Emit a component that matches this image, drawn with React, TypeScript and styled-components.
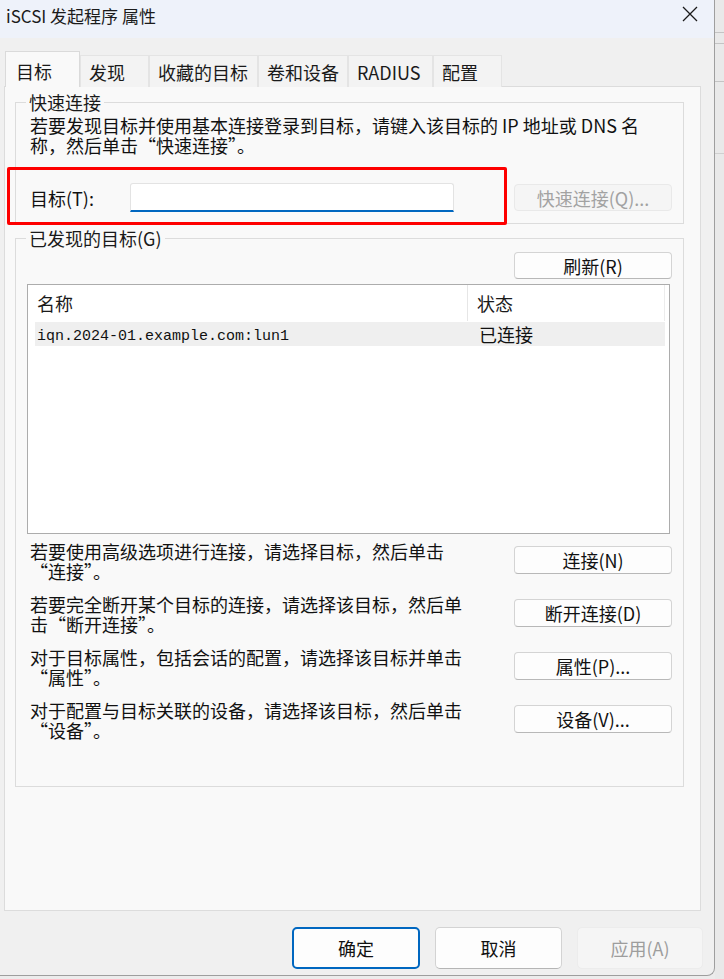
import styled, { createGlobalStyle } from 'styled-components';

const GlobalStyle = createGlobalStyle`
  html, body {
    margin: 0;
    padding: 0;
    background: #ececec;
  }
  body {
    font-family: "Noto Sans CJK SC", "Noto Sans", sans-serif;
    color: #000;
    overflow: hidden;
  }
  * { box-sizing: border-box; }
`;

const Screen = styled.div`
  display: flex;
  width: 724px;
  height: 979px;
`;

const Window = styled.div`
  position: relative;
  width: 715px;
  height: 976px;
  background: #f0f0f0;
  border-right: 1px solid #9e9e9e;
  border-bottom: 1px solid #9e9e9e;
  border-bottom-right-radius: 8px;
  display: flex;
  flex-direction: column;
`;

const Edge = styled.div`
  flex: 1;
  background:
    linear-gradient(#c4c4c4, #c4c4c4) 0 32px / 100% 1px no-repeat,
    linear-gradient(#c4c4c4, #c4c4c4) 0 43px / 100% 1px no-repeat,
    linear-gradient(#c4c4c4, #c4c4c4) 0 81px / 100% 1px no-repeat,
    linear-gradient(#d0d0d0, #d0d0d0) 0 153px / 100% 1px no-repeat,
    #e9e9e9;
`;

const TitleBar = styled.div`
  height: 38px;
  background: #eef2fa;
  display: flex;
  justify-content: space-between;
  align-items: flex-start;
  padding: 5px 16px 0 6px;
`;

const Title = styled.div`
  font-size: 17px;
  line-height: 22px;
  color: #1b1b1b;
`;

const Close = styled.div`
  width: 16px;
  height: 16px;
  margin-top: 1px;
  display: flex;
`;

const TabStrip = styled.div`
  margin-top: 13px;
  padding-left: 5px;
  height: 36px;
  display: flex;
  align-items: flex-end;
  position: relative;
  z-index: 1;
`;

const Tab = styled.div<{ $w: number; $active?: boolean }>`
  width: ${p => p.$w}px;
  height: ${p => (p.$active ? 36 : 32)}px;
  padding: ${p => (p.$active ? '3px 0 0 10px' : '0 0 0 8px')};
  display: flex;
  align-items: center;
  font-size: 18px;
  line-height: 24px;
  white-space: nowrap;
  color: #1a1a1a;
  background: ${p => (p.$active ? '#f9f9f9' : '#f3f3f3')};
  border: 1px solid ${p => (p.$active ? '#dadada' : '#e4e4e4')};
  border-bottom: none;
`;

const Panel = styled.div`
  margin: -1px 13px 0 4px;
  height: 825px;
  background: #f9f9f9;
  border: 1px solid #dcdcdc;
  padding: 15px 16px 0 10px;
  display: flex;
  flex-direction: column;
`;

const GroupBox = styled.div<{ $top: number; $bottom: number }>`
  position: relative;
  margin-top: ${p => p.$top}px;
  border: 1px solid #dcdcdc;
  padding: 12px 11px ${p => p.$bottom}px 14px;
  display: flex;
  flex-direction: column;
`;

const Caption = styled.span`
  position: absolute;
  top: -11px;
  left: 10px;
  padding: 0 3px;
  background: #f9f9f9;
  font-size: 18px;
  line-height: 20px;
  color: #1a1a1a;
`;

const Text = styled.div`
  font-size: 18px;
  line-height: 20px;
  white-space: nowrap;
  color: #111;
`;

const TargetRow = styled.div`
  margin-top: 28px;
  height: 29px;
  display: flex;
  align-items: center;
`;

const Label = styled.div`
  width: 100px;
  font-size: 18px;
  line-height: 20px;
  color: #111;
`;

const Input = styled.div`
  width: 324px;
  height: 29px;
  background: #fff;
  border: 1px solid #e3e3e3;
  border-bottom: 2px solid #0067c0;
  border-radius: 3px 3px 0 0;
`;

const Button = styled.div<{ $disabled?: boolean; $w?: number; $h?: number }>`
  width: ${p => p.$w ?? 158}px;
  height: ${p => p.$h ?? 28}px;
  display: flex;
  align-items: center;
  justify-content: center;
  font-size: 18px;
  line-height: 20px;
  white-space: nowrap;
  border-radius: 4px;
  color: ${p => (p.$disabled ? '#a2a2a2' : '#111')};
  background: ${p => (p.$disabled ? '#f5f5f5' : '#fdfdfd')};
  border: 1px solid ${p => (p.$disabled ? '#e9e9e9' : '#d4d4d4')};
  border-bottom-color: ${p => (p.$disabled ? '#e9e9e9' : '#b8b8b8')};
`;

const PushRight = styled.div`
  margin-left: auto;
`;

const RefreshWrap = styled.div`
  align-self: flex-end;
  margin-top: 1px;
`;

const ListView = styled.div`
  margin: 5px 2px 0 -3px;
  height: 250px;
  background: #fff;
  border: 1px solid #acacac;
  display: flex;
  flex-direction: column;
`;

const HeaderRow = styled.div`
  height: 36px;
  display: flex;
  margin-right: 4px;
  border-right: 1px solid #ececec;
`;

const HeaderCell = styled.div<{ $w?: number }>`
  ${p => (p.$w ? `width: ${p.$w}px; border-right: 1px solid #e6e6e6;` : 'flex: 1;')}
  display: flex;
  align-items: center;
  padding-left: 9px;
  font-size: 18px;
  color: #1a1a1a;
`;

const ItemRow = styled.div`
  margin: 1px 4px 0 7px;
  height: 24px;
  background: #efefef;
  display: flex;
  align-items: center;
`;

const ItemCell = styled.div<{ $w?: number }>`
  ${p => (p.$w ? `width: ${p.$w}px;` : 'flex: 1;')}
  padding-left: 2px;
  font-size: 18px;
  line-height: 20px;
  color: #111;
`;

const Mono = styled.span`
  font-family: "Liberation Mono", monospace;
  font-size: 15px;
`;

const Actions = styled.div`
  margin-top: 7px;
  display: flex;
  flex-direction: column;
  gap: 13px;
`;

const ActionRow = styled.div`
  height: 40px;
  display: flex;
  justify-content: space-between;
  align-items: flex-start;
`;

const ActionButton = styled(Button)`
  margin-top: 5px;
`;

const Footer = styled.div`
  display: flex;
  justify-content: flex-end;
  gap: 15px;
  padding: 16px 11px 0 0;
`;

const DialogButton = styled.div<{ $w: number; $variant?: 'default' | 'disabled' }>`
  width: ${p => p.$w}px;
  height: 42px;
  display: flex;
  align-items: center;
  justify-content: center;
  font-size: 18px;
  border-radius: 5px;
  color: ${p => (p.$variant === 'disabled' ? '#9d9d9d' : '#111')};
  background: ${p => (p.$variant === 'disabled' ? '#f5f5f5' : '#fdfdfd')};
  border: ${p =>
    p.$variant === 'default'
      ? '2px solid #0067c0'
      : p.$variant === 'disabled'
      ? '1px solid #ececec'
      : '1px solid #d3d3d3'};
  ${p => (p.$variant ? '' : 'border-bottom-color: #b5b5b5;')}
`;

const Highlight = styled.div`
  position: absolute;
  left: 7px;
  top: 167px;
  width: 500px;
  height: 58px;
  border: 3px solid #fe0000;
  border-radius: 2px;
  pointer-events: none;
`;

const tabs = [
  { label: '目标', w: 75 },
  { label: '发现', w: 69 },
  { label: '收藏的目标', w: 109 },
  { label: '卷和设备', w: 90 },
  { label: 'RADIUS', w: 85 },
  { label: '配置', w: 69 },
];

const actions = [
  { lines: ['若要使用高级选项进行连接，请选择目标，然后单击', '“连接”。'], button: '连接(N)' },
  { lines: ['若要完全断开某个目标的连接，请选择该目标，然后单', '击“断开连接”。'], button: '断开连接(D)' },
  { lines: ['对于目标属性，包括会话的配置，请选择该目标并单击', '“属性”。'], button: '属性(P)...' },
  { lines: ['对于配置与目标关联的设备，请选择该目标，然后单击', '“设备”。'], button: '设备(V)...' },
];

const App = () => {
  return (
    <Screen lang="zh-CN">
      <GlobalStyle />
      <Window>
        <TitleBar>
          <Title>iSCSI 发起程序 属性</Title>
          <Close>
            <svg width="16" height="16" viewBox="0 0 16 16">
              <path d="M1 1 L15 15 M15 1 L1 15" stroke="#1a1a1a" strokeWidth="1.3" fill="none" />
            </svg>
          </Close>
        </TitleBar>

        <TabStrip>
          {tabs.map((t, i) => (
            <Tab key={t.label} $w={t.w} $active={i === 0}>
              {t.label}
            </Tab>
          ))}
        </TabStrip>

        <Panel>
          <GroupBox $top={0} $bottom={11}>
            <Caption>快速连接</Caption>
            <Text>
              若要发现目标并使用基本连接登录到目标，请键入该目标的 IP 地址或 DNS 名
              <br />
              称，然后单击“快速连接”。
            </Text>
            <TargetRow>
              <Label>目标(T):</Label>
              <Input />
              <PushRight>
                <Button $disabled $h={27}>快速连接(Q)...</Button>
              </PushRight>
            </TargetRow>
          </GroupBox>

          <GroupBox $top={14} $bottom={46}>
            <Caption>已发现的目标(G)</Caption>
            <RefreshWrap>
              <Button $h={27}>刷新(R)</Button>
            </RefreshWrap>
            <ListView>
              <HeaderRow>
                <HeaderCell $w={440}>名称</HeaderCell>
                <HeaderCell>状态</HeaderCell>
              </HeaderRow>
              <ItemRow>
                <ItemCell $w={442}>
                  <Mono>iqn.2024-01.example.com:lun1</Mono>
                </ItemCell>
                <ItemCell>已连接</ItemCell>
              </ItemRow>
            </ListView>
            <Actions>
              {actions.map(a => (
                <ActionRow key={a.button}>
                  <Text>
                    {a.lines[0]}
                    <br />
                    {a.lines[1]}
                  </Text>
                  <ActionButton>{a.button}</ActionButton>
                </ActionRow>
              ))}
            </Actions>
          </GroupBox>
        </Panel>

        <Footer>
          <DialogButton $w={128} $variant="default">确定</DialogButton>
          <DialogButton $w={127}>取消</DialogButton>
          <DialogButton $w={126} $variant="disabled">应用(A)</DialogButton>
        </Footer>

        <Highlight />
      </Window>
      <Edge />
    </Screen>
  );
};

export default App;
